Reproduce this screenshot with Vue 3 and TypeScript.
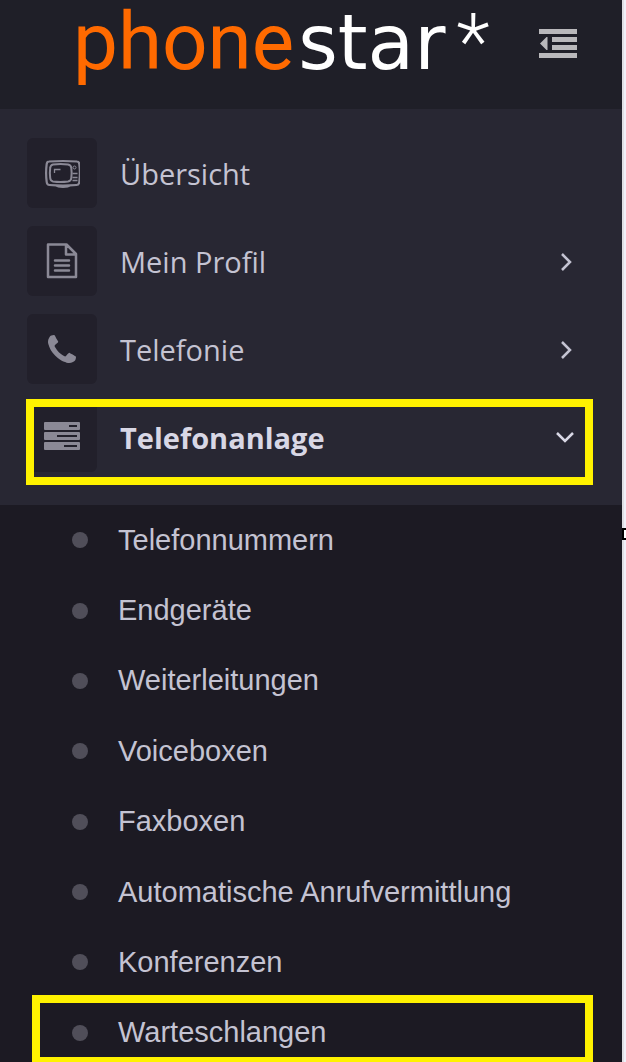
<script setup lang="ts">
import { ref } from 'vue'

interface MenuEntry {
  label: string
  icon: 'tv' | 'file' | 'phone' | 'server'
  expandable: boolean
}

const entries: MenuEntry[] = [
  { label: 'Übersicht', icon: 'tv', expandable: false },
  { label: 'Mein Profil', icon: 'file', expandable: true },
  { label: 'Telefonie', icon: 'phone', expandable: true },
  { label: 'Telefonanlage', icon: 'server', expandable: true },
]

const subEntries: string[] = [
  'Telefonnummern',
  'Endgeräte',
  'Weiterleitungen',
  'Voiceboxen',
  'Faxboxen',
  'Automatische Anrufvermittlung',
  'Konferenzen',
  'Warteschlangen',
]

const openEntry = ref('Telefonanlage')
const marked = ref('Warteschlangen')

function toggle(entry: MenuEntry) {
  openEntry.value = openEntry.value === entry.label ? '' : entry.label
}
</script>

<template>
  <div class="page">
    <div class="sidebar">
      <header class="brand">
        <a class="logo" href="#"><span class="logo-phone">phone</span><span class="logo-star">star</span><span class="logo-mark">*</span></a>
        <button class="collapse" type="button" aria-label="Menü einklappen">
          <svg viewBox="0 0 38 29" width="38" height="29" aria-hidden="true">
            <path fill="currentColor" d="M0 0h38v5H0zM13 8h25v5H13zM13 16h25v5H13zM0 24h38v5H0zM8.500 8v13H7.500L1 14.500 7.500 8z" />
          </svg>
        </button>
      </header>

      <nav class="nav">
        <ul class="menu">
          <li v-for="entry in entries" :key="entry.label">
            <button
              class="entry"
              :class="{ open: openEntry === entry.label }"
              type="button"
              @click="toggle(entry)"
            >
              <span class="tile">
                <svg v-if="entry.icon === 'tv'" viewBox="-1 -2 36 30" width="36" height="30" fill="none" stroke="currentColor" aria-hidden="true">
                  <path stroke-width="2.200" d="M4 1.500Q18 .5 32 1.500Q34 1.500 34.300 4Q35.500 13 34.300 22Q34 25 31.500 25Q18 26 4.500 25Q2 25 1.700 22Q.5 13 1.700 4Q2 1.500 4 1.500z" />
                  <path stroke-width="2" d="M8 4.500Q15.500 3.500 23 4.500Q26 5 26.300 8Q27 13 26.300 18Q26 21 23 21.500Q15.500 22.500 8 21.500Q5.500 21 5.200 18Q4.500 13 5.200 8Q5.500 5 8 4.500z" />
                  <path stroke-width="1.300" d="M9.500 13v-3.500h6M27.500 13.500h5M27.500 17.500h5M27.500 20.500h5" />
                  <circle cx="29.500" cy="7.500" r="1.500" />
                  <path fill="currentColor" stroke="none" d="M10 25.500h16q-2 2.500-8 2.500t-8-2.500z" />
                </svg>
                <svg v-else-if="entry.icon === 'file'" viewBox="0 0 32 36" width="32" height="36" fill="none" stroke="currentColor" aria-hidden="true">
                  <path stroke-width="2.500" stroke-linejoin="round" d="M2 1.500h18.500l9.500 9.500v23H2zM20 1.500V11.500h10" />
                  <path stroke-width="2.500" stroke-linecap="round" d="M9 17.500h14M9 22.500h14M9 27.500h14" />
                </svg>
                <svg v-else-if="entry.icon === 'phone'" viewBox="0 0 1408 1408" width="28" height="28" aria-hidden="true">
                  <path fill="currentColor" d="M1408 1112q0 27-10 70.500t-21 68.500q-21 50-122 106-94 51-186 51-27 0-53-3.500t-57.500-12.500-47-14.500-55.500-20.500-49-18q-98-35-175-83-127-79-264-216t-216-264q-48-77-83-175-3-9-18-49t-20.500-55.500-14.500-47-12.500-57.500-3.500-53q0-92 51-186 56-101 106-122 25-11 68.500-21t70.500-10q14 0 21 3 18 6 53 76 11 19 30 54t35 63.500 31 53.500q3 4 17.500 25t21.500 35.500 7 28.500q0 20-28.500 50t-62 55-62 53-28.500 46q0 9 5 22.500t8.500 20.500 14 24 11.500 19q76 137 174 235t235 174q2 1 19 11.500t24 14 20.500 8.500 22.500 5q18 0 46-28.500t53-62 55-62 50-28.500q14 0 28.500 7t35.500 21.500 25 17.500q25 15 53.500 31t63.500 35 54 30q70 35 76 53 3 7 3 21z" />
                </svg>
                <svg v-else viewBox="0 0 36 30" width="36" height="30" aria-hidden="true">
                  <g fill="currentColor">
                    <rect width="36" height="8" rx="1" />
                    <rect y="10" width="36" height="8" rx="1" />
                    <rect y="20" width="36" height="8" rx="1" />
                  </g>
                  <path stroke="#22202b" stroke-width="2" d="M25 4h8M13 14h20M20 24h13" />
                </svg>
              </span>
              <span class="label">{{ entry.label }}</span>
              <svg v-if="entry.expandable" class="chevron" viewBox="0 0 20 20" width="20" height="20" aria-hidden="true">
                <path fill="none" stroke="currentColor" stroke-width="2.500" d="M6 3l8 8-8 8" />
              </svg>
            </button>
          </li>
        </ul>

        <ul class="submenu">
          <li v-for="name in subEntries" :key="name">
            <a class="sub" :class="{ marked: marked === name }" href="#" @click.prevent="marked = name">
              <span class="dot"></span>{{ name }}
            </a>
          </li>
        </ul>
      </nav>
    </div>
    <div class="edge"><span class="handle"></span></div>
  </div>
</template>

<style>
html {
  scrollbar-width: none;
}
body {
  margin: 0;
  background: #1c1a23;
}
</style>

<style scoped>
.page {
  display: flex;
  min-height: 100vh;
  font-family: "Open Sans", "Noto Sans", sans-serif;
}
.sidebar {
  flex: 1;
  min-width: 0;
  background: #1c1a23;
}
.brand {
  display: flex;
  align-items: flex-start;
  justify-content: space-between;
  height: 109px;
  box-sizing: border-box;
  padding: 0 45px 0 73px;
  background: #1f1f28;
}
.logo {
  display: flex;
  align-items: baseline;
  font-family: Roboto, sans-serif;
  font-size: 80px;
  line-height: 84px;
  color: #fff;
  text-decoration: none;
}
.logo-phone {
  color: #ff6a00;
}
.logo-star {
  padding-left: 4px;
  font-family: "DejaVu Sans", sans-serif;
  font-size: 76px;
}
.logo-mark {
  padding-left: 11px;
  font-size: 78px;
  font-weight: 300;
}
.collapse {
  display: flex;
  margin-top: 29px;
  padding: 0;
  border: 0;
  background: none;
  color: #b9b8bb;
}
.menu,
.submenu {
  margin: 0;
  padding: 0;
  list-style: none;
}
.menu {
  display: grid;
  gap: 18px;
  padding: 29px 46px 33px 27px;
  background: #282733;
}
.entry {
  position: relative;
  display: flex;
  align-items: center;
  width: 100%;
  padding: 0;
  border: 0;
  background: none;
  font: inherit;
  font-size: 29px;
  line-height: 40px;
  color: #c4c3d2;
  text-align: left;
}
.tile {
  display: grid;
  place-items: center;
  width: 70px;
  height: 70px;
  border-radius: 6px;
  background: #22202b;
  color: #8b8996;
}
.label {
  flex: 1;
  padding: 2px 0 0 23px;
}
.open {
  font-weight: 700;
  color: #d8d7e5;
}
.open .chevron {
  transform: rotate(90deg);
}
.open::after {
  content: "";
  position: absolute;
  inset: -3px -17px -13px -1px;
  border: 8px solid #fff200;
}
.submenu {
  display: grid;
  grid-auto-rows: 1fr;
  min-height: 563px;
}
.sub {
  position: relative;
  display: flex;
  align-items: center;
  gap: 30px;
  height: 100%;
  padding: 0 29px 0 72px;
  box-sizing: border-box;
  font-family: "Liberation Sans", Arial, sans-serif;
  font-size: 29px;
  color: #c4c3d2;
  text-decoration: none;
}
.dot {
  width: 16px;
  height: 16px;
  border-radius: 50%;
  background: #504e59;
}
.marked::after {
  content: "";
  position: absolute;
  inset: -3px 29px 3px 32px;
  border: 8px solid #fff200;
}
.edge {
  position: relative;
  width: 4px;
  box-sizing: border-box;
  border-left: 2px solid #dfdfe4;
  background: #f0f0f9;
}
.handle {
  position: absolute;
  top: 528px;
  left: -2px;
  width: 4px;
  height: 12px;
  box-sizing: border-box;
  border: 2px solid #000;
  border-right: 0;
  background: #fff;
}
</style>
